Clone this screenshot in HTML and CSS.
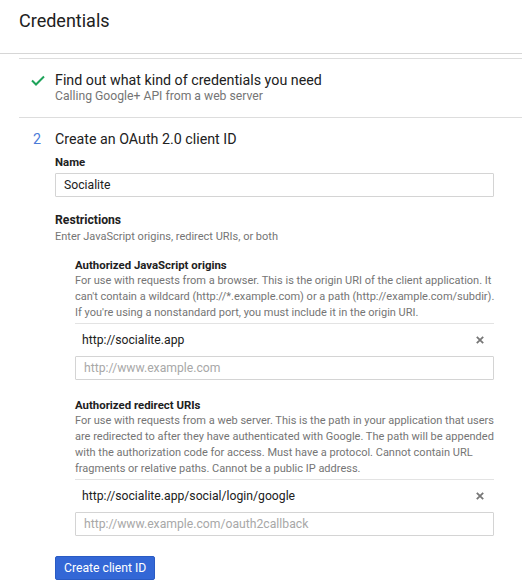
FILE: index.html
```html
<!DOCTYPE html>
<html lang="en">
<head>
<meta charset="utf-8">
<title>Credentials</title>
<link rel="stylesheet" href="styles.css">
</head>
<body>
<header class="page-header">
  <h1 class="page-title">Credentials</h1>
</header>
<main class="steps">
  <section class="step step-done">
    <div class="step-marker">
      <svg class="check" width="14" height="11" viewBox="0 0 14 11"><path d="M1 5.5 L5 9.5 L13 1.5" fill="none" stroke="#1ea35a" stroke-width="2"/></svg>
    </div>
    <div class="step-body">
      <div class="step-title">Find out what kind of credentials you need</div>
      <div class="step-sub">Calling Google+ API from a web server</div>
    </div>
  </section>
  <section class="step step-active">
    <div class="step-marker step-num">2</div>
    <div class="step-body">
      <div class="step-title">Create an OAuth 2.0 client ID</div>
      <label class="field-label">Name</label>
      <div class="text-input filled">Socialite</div>

      <div class="restrictions-title">Restrictions</div>
      <div class="hint">Enter JavaScript origins, redirect URIs, or both</div>

      <div class="subsection">
        <div class="sub-label">Authorized JavaScript origins</div>
        <p class="sub-desc">For use with requests from a browser. This is the origin URI of the client application. It can't contain a wildcard (http://*.example.com) or a path (http://example.com/subdir). If you're using a nonstandard port, you must include it in the origin URI.</p>
        <div class="entry-row">
          <span class="entry-text">http://socialite.app</span>
          <svg class="remove" width="8" height="8" viewBox="0 0 8 8"><path d="M0.8 0.8 L7.2 7.2 M7.2 0.8 L0.8 7.2" stroke="#777" stroke-width="1.8"/></svg>
        </div>
        <div class="text-input placeholder">http://www.example.com</div>
      </div>

      <div class="subsection second">
        <div class="sub-label">Authorized redirect URIs</div>
        <p class="sub-desc">For use with requests from a web server. This is the path in your application that users are redirected to after they have authenticated with Google. The path will be appended with the authorization code for access. Must have a protocol. Cannot contain URL fragments or relative paths. Cannot be a public IP address.</p>
        <div class="entry-row">
          <span class="entry-text">http://socialite.app/social/login/google</span>
          <svg class="remove" width="8" height="8" viewBox="0 0 8 8"><path d="M0.8 0.8 L7.2 7.2 M7.2 0.8 L0.8 7.2" stroke="#777" stroke-width="1.8"/></svg>
        </div>
        <div class="text-input placeholder">http://www.example.com/oauth2callback</div>
      </div>

      <button class="primary-btn" type="button">Create client ID</button>
    </div>
  </section>
</main>
</body>
</html>
```
FILE: styles.css
```css
* { box-sizing: border-box; }
body {
  margin: 0;
  font-family: Roboto, "Liberation Sans", Arial, sans-serif;
  color: #212121;
  background: #fff;
}
.page-header {
  height: 54px;
  padding: 0 19px;
  border-bottom: 1px solid #d6d6d6;
}
.page-title {
  margin: 0;
  padding-top: 10px;
  font-size: 18px;
  line-height: 22px;
  font-weight: 400;
  color: #212121;
}
.steps {
  margin: 4px 0 0 19px;
}
.step {
  display: flex;
  border-top: 1px solid #ddd;
}
.step-done {
  padding: 12px 0 13px 0;
  border-bottom: 1px solid #ddd;
}
.step-active {
  border-top: 0;
  padding-top: 12px;
}
.step-marker {
  width: 36px;
  flex: none;
  padding-left: 12px;
}
.check {
  display: block;
  margin-top: 4px;
}
.step-num {
  padding-left: 14px;
  font-size: 14.25px;
  line-height: 18px;
  color: #4a7bd8;
}
.step-body {
  flex: 1;
  padding-right: 28px;
}
.step-title {
  font-size: 14.25px;
  line-height: 18px;
  color: #212121;
}
.step-sub {
  font-size: 12.2px;
  line-height: 15px;
  color: #757575;
}
.field-label {
  display: block;
  margin-top: 7px;
  font-size: 11.4px;
  line-height: 15px;
  font-weight: 700;
  color: #212121;
}
.text-input {
  height: 24px;
  border: 1px solid #d4d4d4;
  border-radius: 1px;
  padding: 0 8px;
  font-size: 12.2px;
  line-height: 22px;
}
.filled {
  margin-top: 3px;
  color: #212121;
}
.placeholder { color: #a8a8a8; }
.restrictions-title {
  margin-top: 15px;
  font-size: 12.2px;
  line-height: 17px;
  font-weight: 700;
}
.hint {
  font-size: 11px;
  line-height: 16px;
  color: #757575;
}
.subsection {
  margin-left: 20px;
  margin-top: 13px;
}
.subsection.second {
  margin-top: 18px;
}
.sub-label {
  font-size: 11.4px;
  line-height: 15px;
  font-weight: 700;
  color: #212121;
}
.sub-desc {
  margin: 0 -6px 2px 0;
  font-size: 11px;
  line-height: 16px;
  color: #757575;
}
.entry-row {
  display: flex;
  align-items: center;
  justify-content: space-between;
  height: 33px;
  border-top: 1px solid #e3e3e3;
  padding: 0 10px 0 7px;
}
.entry-text {
  font-size: 12.2px;
  color: #212121;
}
.remove { display: block; }
.primary-btn {
  display: block;
  margin-top: 20px;
  height: 24px;
  padding: 0 8px;
  border: 1px solid #2a5bc4;
  border-radius: 2px;
  background: #3367d6;
  color: #fff;
  font-family: Roboto, "Liberation Sans", Arial, sans-serif;
  font-size: 12.2px;
  line-height: 22px;
}
```
